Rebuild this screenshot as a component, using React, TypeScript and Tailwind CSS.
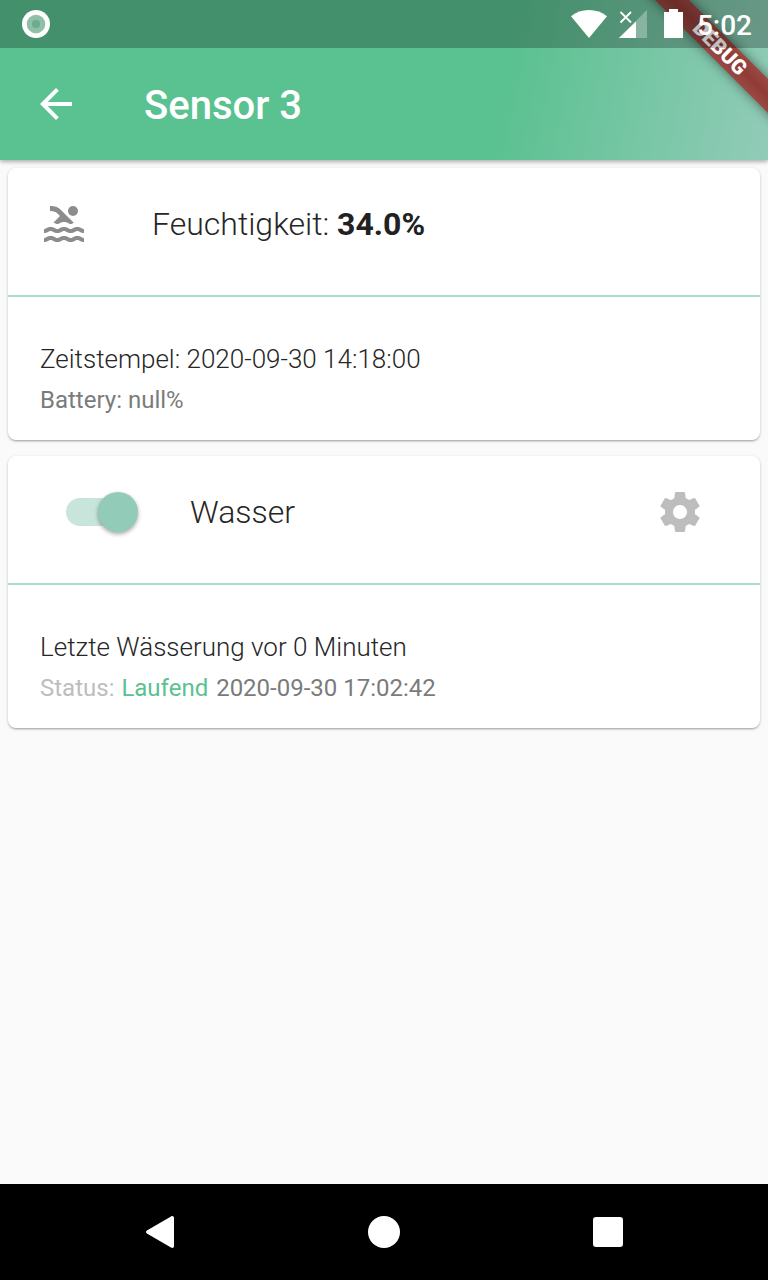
import type { ReactNode } from "react";

function StatusBar() {
  return (
    <div className="relative flex h-12 items-center justify-between bg-black/25 pr-4 pl-[22px]">
      <svg className="h-7 w-7" viewBox="0 0 28 28">
        <circle cx="14" cy="14" r="14" fill="#fff" />
        <circle cx="14" cy="14" r="9.3" fill="#90bfa7" />
        <circle cx="14" cy="14" r="4" fill="#6dab8d" />
      </svg>
      <div className="flex items-center">
        <svg className="mr-[10.500px] h-7 w-9" viewBox="0 0 36 28">
          <path d="M18 28L0 6.2C5 2.2 11.2 0 18 0s13 2.200 18 6.200z" fill="#fff" />
        </svg>
        <svg className="mr-[17px] h-7 w-[29px]" viewBox="0 0 29 28">
          <path d="M1 28L29 0V28z" fill="#fff" fillOpacity=".3" />
          <path d="M1 28L18 11.500V28z" fill="#fff" />
          <path d="M2.500 2l10.500 10.500M13 2l-10.500 10.500" stroke="#fff" strokeWidth="1.800" />
        </svg>
        <svg className="mr-[14px] mb-px h-[29px] w-[19px]" viewBox="0 0 19 29">
          <path d="M5 0h9v3h5v26H0V3h5z" fill="#fff" />
        </svg>
        <span className="pt-[3px] text-[28px] leading-8 font-medium text-white">5:02</span>
      </div>
    </div>
  );
}

function DebugBanner() {
  return (
    <div className="absolute top-0 right-0 h-40 w-40 overflow-hidden">
      <div className="absolute top-9 left-[12px] flex h-6 w-[200px] rotate-45 items-center justify-center bg-[linear-gradient(#9b4843,#903b36_50%,#9b4843)] text-[20.8px] leading-6 font-black text-white shadow-[0_0_12px_rgba(0,0,0,0.5)]">
        DEBUG
      </div>
    </div>
  );
}

function Card({ header, children }: { header: ReactNode; children: ReactNode }) {
  return (
    <section className="h-[272px] rounded-lg bg-white shadow-[0_2px_2px_-1px_rgba(0,0,0,0.2),0_1px_3px_rgba(0,0,0,0.22)]">
      <div className="flex h-[129px] items-start border-b-2 border-[#a9dfc6]">{header}</div>
      <div className="px-8 pt-[43px]">{children}</div>
    </section>
  );
}

export default function App() {
  return (
    <div className="flex h-[1280px] w-[768px] flex-col overflow-hidden bg-[#fafafa] font-[Roboto,sans-serif]">
      <header className="relative z-10 h-40 bg-[linear-gradient(101.77deg,#5ac190_0%,#5ac190_65%,#92cbb8_100%)] shadow-[0_2px_4px_rgba(0,0,0,0.3)]">
        <DebugBanner />
        <StatusBar />
        <div className="flex h-28 items-center pl-8">
          <svg className="h-12 w-12" viewBox="0 0 24 24" fill="#fff">
            <path d="M20 11H7.830l5.590-5.590L12 4l-8 8 8 8 1.410-1.410L7.830 13H20v-2z" />
          </svg>
          <h1 className="pt-1 pl-16 text-[40px] leading-[48px] font-medium text-white">Sensor 3</h1>
        </div>
      </header>

      <main className="flex flex-1 flex-col gap-4 p-2">
        <Card
          header={
            <>
              <svg className="mt-8 ml-8 h-12 w-12" viewBox="0 0 24 24" fill="#8c8c8c">
                <path d="M22 21c-1.110 0-1.730-.370-2.180-.640-.370-.220-.600-.360-1.150-.360-.560 0-.780.130-1.150.360-.460.270-1.070.640-2.180.640s-1.730-.370-2.180-.640c-.370-.220-.600-.360-1.150-.360-.560 0-.780.130-1.150.360-.460.270-1.080.640-2.190.640-1.110 0-1.730-.370-2.180-.640-.370-.230-.600-.360-1.150-.360s-.780.130-1.150.360c-.460.270-1.080.640-2.190.640v-2c.560 0 .780-.130 1.150-.360.460-.270 1.080-.640 2.190-.640s1.730.370 2.180.640c.370.230.590.360 1.150.360.560 0 .780-.130 1.150-.360.460-.270 1.080-.640 2.190-.640 1.110 0 1.730.370 2.180.640.370.220.600.360 1.150.360s.780-.130 1.150-.360c.450-.270 1.070-.640 2.180-.640s1.730.370 2.180.640c.370.230.590.360 1.150.360v2zm0-4.500c-1.110 0-1.730-.370-2.180-.640-.370-.220-.600-.360-1.150-.360-.560 0-.780.130-1.150.360-.450.270-1.070.640-2.180.640s-1.730-.370-2.180-.640c-.370-.220-.600-.360-1.150-.360-.560 0-.780.130-1.150.360-.450.270-1.070.640-2.180.640s-1.730-.370-2.180-.640c-.370-.220-.600-.360-1.150-.360s-.780.130-1.150.360c-.470.270-1.090.640-2.200.640v-2c.560 0 .780-.130 1.150-.360.450-.270 1.070-.640 2.180-.640s1.730.370 2.180.640c.370.220.600.360 1.150.360.560 0 .780-.130 1.150-.360.450-.270 1.070-.640 2.180-.640s1.730.370 2.180.640c.370.220.600.360 1.150.360s.780-.130 1.150-.360c.450-.270 1.070-.640 2.180-.640s1.730.370 2.180.640c.370.220.600.360 1.150.360v2zM8.670 12c.560 0 .780-.130 1.150-.360.460-.270 1.080-.640 2.190-.640 1.110 0 1.730.370 2.180.640.370.220.600.360 1.150.360s.780-.130 1.150-.360c.120-.070.260-.150.410-.230L10.480 5C8.930 3.450 7.500 2.990 5 3v2.500c1.820-.010 2.890.390 4 1.500l1 1-3.250 3.250c.310.120.560.270.770.390.370.230.590.360 1.150.360z" />
                <circle cx="16.500" cy="5.500" r="2.500" />
              </svg>
              <p className="mt-[37px] ml-16 text-[32px] leading-[38px] font-light text-[#262626]">
                Feuchtigkeit: <span className="font-bold text-[#212121]">34.0%</span>
              </p>
            </>
          }
        >
          <p className="text-[26px] leading-[38px] font-light text-[#262626]">Zeitstempel: 2020-09-30 14:18:00</p>
          <p className="pt-1 text-2xl leading-9 text-[#7b7b7b]">Battery: null%</p>
        </Card>

        <Card
          header={
            <>
              <div className="relative mt-[42px] ml-[58px] flex h-7 w-[66px] rounded-full bg-[#c8e5db]">
                <span className="absolute -top-1.5 left-8 h-10 w-10 rounded-full bg-[#92cbb8] shadow-[0_2px_4px_rgba(0,0,0,0.35)]" />
              </div>
              <p className="mt-[37px] ml-[58px] flex-1 text-[32px] leading-[38px] font-light text-[#262626]">Wasser</p>
              <svg className="mt-8 mr-14 h-12 w-12" viewBox="0 0 24 24" fill="#bdbdbd">
                <path d="M19.430 12.980c.040-.320.070-.640.070-.980s-.030-.660-.070-.980l2.110-1.650c.190-.150.240-.420.120-.640l-2-3.460c-.120-.220-.390-.300-.610-.220l-2.490 1c-.520-.400-1.080-.730-1.690-.980l-.380-2.650C14.460 2.180 14.250 2 14 2h-4c-.250 0-.460.180-.490.420l-.380 2.650c-.610.250-1.170.590-1.690.980l-2.490-1c-.230-.090-.490 0-.610.220l-2 3.460c-.130.220-.070.490.120.640l2.110 1.650c-.040.320-.070.650-.070.980s.030.660.070.980l-2.110 1.650c-.190.150-.240.420-.120.640l2 3.460c.120.220.390.300.610.220l2.490-1c.520.400 1.080.730 1.690.980l.380 2.650c.030.240.240.420.490.420h4c.250 0 .460-.180.490-.420l.380-2.650c.610-.250 1.170-.590 1.690-.980l2.490 1c.230.090.490 0 .610-.220l2-3.460c.120-.220.070-.490-.120-.640l-2.110-1.650zM12 15.500c-1.930 0-3.500-1.570-3.500-3.500s1.570-3.500 3.500-3.500 3.500 1.570 3.500 3.500-1.570 3.500-3.500 3.500z" />
              </svg>
            </>
          }
        >
          <p className="text-[26px] leading-[38px] font-light text-[#262626]">Letzte Wässerung vor 0 Minuten</p>
          <p className="pt-1 text-2xl leading-9 text-[#7b7b7b]">
            <span className="mr-px text-[#bdbdbd]">Status:</span>{" "}
            <span className="mr-0.5 text-[#5ac190]">Laufend</span> 2020-09-30 17:02:42
          </p>
        </Card>
      </main>

      <nav className="flex h-24 items-center justify-between bg-black px-[145px]">
        <svg className="h-8 w-[30px]" viewBox="0 0 30 32" fill="#fff">
          <path d="M1.900 14.500L26 .400C27.500-.500 29 .400 29 2v28c0 1.600-1.500 2.500-3 1.600L1.900 17.500C.700 16.800.700 15.200 1.900 14.500z" />
        </svg>
        <span className="h-8 w-8 rounded-full bg-white" />
        <span className="h-[30px] w-[30px] rounded-[3px] bg-white" />
      </nav>
    </div>
  );
}
